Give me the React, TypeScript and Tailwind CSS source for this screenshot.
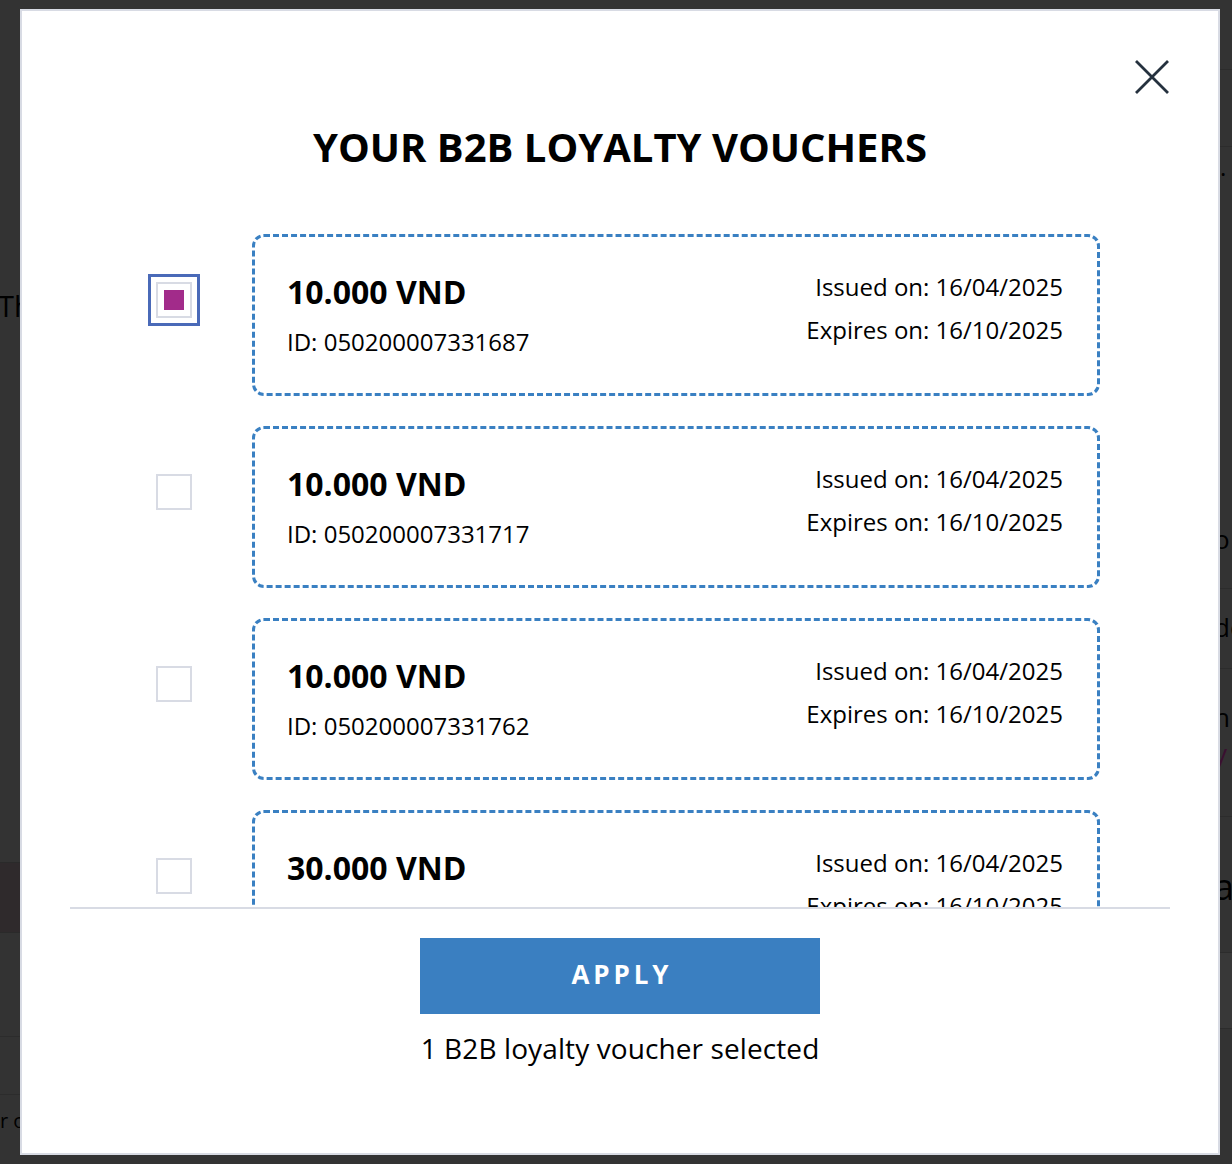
import { useState } from "react";

const vouchers = [
  { id: "050200007331687", amount: "10.000 VND", issued: "16/04/2025", expires: "16/10/2025" },
  { id: "050200007331717", amount: "10.000 VND", issued: "16/04/2025", expires: "16/10/2025" },
  { id: "050200007331762", amount: "10.000 VND", issued: "16/04/2025", expires: "16/10/2025" },
  { id: "050200007331801", amount: "30.000 VND", issued: "16/04/2025", expires: "16/10/2025" },
];

export default function App() {
  const [selected, setSelected] = useState<string[]>([vouchers[0].id]);

  const toggle = (id: string) =>
    setSelected((s) => (s.includes(id) ? s.filter((x) => x !== id) : [...s, id]));

  return (
    <div className="flex w-[1232px] h-[1164px] bg-[#333333] font-['Open_Sans',sans-serif] overflow-hidden">
      {/* ── page behind the overlay (left sliver) ── */}
      <div className="w-[20px] shrink-0 flex flex-col overflow-hidden">
        <div className="h-[288px]" />
        <div className="h-[36px] -ml-[2px] text-[29px] leading-[36px] text-black whitespace-nowrap">Th</div>
        <div className="h-[538px]" />
        <div className="h-[71px] bg-[#2f2a2c] border-y border-[#2a2a2a]" />
        <div className="h-[104px] border-b border-[#2c2c2c]" />
        <div className="h-[58px] border-b border-[#2c2c2c]" />
        <div className="h-[40px] pt-[14px] text-[20px] leading-[24px] text-black whitespace-nowrap">r o</div>
      </div>

      {/* ── Modal ── */}
      <div className="relative w-[1200px] shrink-0 my-[9px] border-2 border-[#d8dbe4] bg-white flex flex-col items-center">
        <button className="absolute top-[49px] right-[49px] w-[34px] h-[34px] text-[#25313e]" onClick={() => {}}>
          <svg width="34" height="34" viewBox="0 0 34 34" fill="none" stroke="currentColor" strokeWidth="2.8">
            <path d="M1 1 L33 33 M33 1 L1 33" />
          </svg>
        </button>

        <h2 className="pt-[112px] text-[40px] leading-[48px] font-bold text-black">
          YOUR B2B LOYALTY VOUCHERS
        </h2>

        {/* ── Voucher list ── */}
        <div className="self-stretch mx-[48px] h-[738px] border-b-2 border-[#d8dbe4] overflow-hidden">
          <div className="pt-[63px] flex flex-col gap-[30px]">
            {vouchers.map((v) => {
              const on = selected.includes(v.id);
              return (
                <div key={v.id} className="flex items-start">
                  <button
                    onClick={() => toggle(v.id)}
                    className={
                      on
                        ? "ml-[86px] mt-[48px] w-[36px] h-[36px] shrink-0 border-2 border-[#d8dbe4] flex items-center justify-center outline-3 outline-solid outline-[#4a6ab8] outline-offset-5"
                        : "ml-[86px] mt-[48px] w-[36px] h-[36px] shrink-0 border-2 border-[#d8dbe4] flex items-center justify-center"
                    }
                  >
                    {on && <span className="w-[20px] h-[20px] bg-[#a22b8a]" />}
                  </button>
                  <div className="ml-[60px] w-[848px] h-[162px] shrink-0 border-[3px] border-dashed border-[#3a80c2] rounded-[12px] pt-[35px] pl-[32px] pr-[34px] flex justify-between">
                    <div>
                      <p className="text-[32px] leading-[40px] font-bold text-black">{v.amount}</p>
                      <p className="mt-[15px] text-[24px] leading-[30px] text-black">ID: {v.id}</p>
                    </div>
                    <div className="text-right text-[24px] leading-[30px] text-black">
                      <p>Issued on: {v.issued}</p>
                      <p className="mt-[13px]">Expires on: {v.expires}</p>
                    </div>
                  </div>
                </div>
              );
            })}
          </div>
        </div>

        <button className="mt-[29px] w-[400px] h-[76px] bg-[#3a7fc1] text-white text-[26px] leading-[32px] font-bold tracking-[0.15em] flex items-center justify-center pl-[0.15em] pb-[5px]">
          APPLY
        </button>
        <p className="mt-[15px] text-[28px] leading-[38px] tracking-[0.1px] text-black">
          {selected.length} B2B loyalty voucher{selected.length === 1 ? "" : "s"} selected
        </p>
      </div>

      {/* ── page behind the overlay (right sliver) ── */}
      <div className="w-[12px] shrink-0 flex flex-col overflow-hidden">
        <div className="h-[70px] border-b border-[#2c2c2c]" />
        <div className="h-[77px] border-b border-[#2c2c2c]" />
        <div className="h-[40px] pt-[8px] text-[24px] leading-[24px] text-black">.</div>
        <div className="h-[330px]" />
        <div className="h-[44px] -ml-[6px] text-[26px] leading-[44px] text-black">o</div>
        <div className="h-[28px] border-b border-[#2c2c2c]" />
        <div className="h-[80px] -ml-[6px] pt-[20px] text-[26px] leading-[36px] text-black border-b border-[#2c2c2c]">de</div>
        <div className="h-[148px] -ml-[6px] pt-[30px] border-b border-[#2c2c2c]">
          <p className="text-[26px] leading-[36px] text-black">h</p>
          <p className="text-[26px] leading-[36px] text-[#3a1030]">y</p>
        </div>
        <div className="h-[136px] -ml-[6px] pt-[48px] text-[36px] leading-[44px] text-black border-b border-[#2c2c2c]">a</div>
        <div className="h-[76px] bg-[#383838] border-b border-[#2c2c2c]" />
      </div>
    </div>
  );
}
